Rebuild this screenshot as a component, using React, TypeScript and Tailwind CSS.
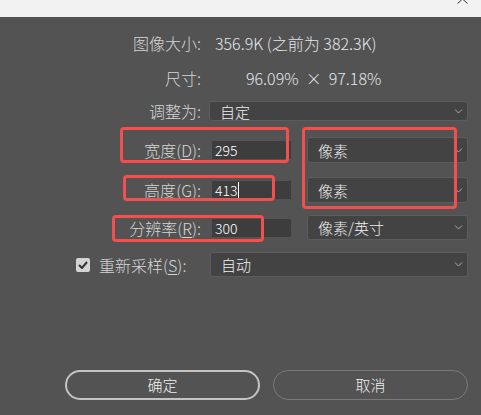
import type { ReactNode } from 'react'

const font = { fontFamily: '"Noto Sans CJK SC", "Noto Sans", sans-serif' }

function Chevron() {
  return (
    <svg width="9" height="5" viewBox="0 0 9 5" className="shrink-0">
      <path d="M1 0.5 L4.5 4 L8 0.5" fill="none" stroke="#a8a8a8" strokeWidth="1" />
    </svg>
  )
}

function Select({ value, className }: { value: string; className: string }) {
  return (
    <div
      className={`flex items-center justify-between rounded-[3px] border border-[#5c5c5c] bg-[#434343] pl-[10px] pr-[4px] text-[15px] text-[#f0f0f0] ${className}`}
    >
      <span className="leading-none">{value}</span>
      <Chevron />
    </div>
  )
}

function Label({ children }: { children: ReactNode }) {
  return (
    <div className="w-[201px] shrink-0 text-right text-[16px] leading-none text-[#d6d6d6]">
      {children}
    </div>
  )
}

function Key({ k }: { k: string }) {
  return (
    <>
      (<span className="underline underline-offset-2">{k}</span>):
    </>
  )
}

function Field({ value, caret }: { value: string; caret?: boolean }) {
  return (
    <div className="ml-[11px] flex h-[18px] w-[79px] shrink-0 items-center bg-[#3d3d3d] pl-[3px] text-[14px] leading-none text-white">
      {value}
      {caret && <span className="ml-px h-[16px] w-px bg-white" />}
    </div>
  )
}

function RedBox({ className }: { className: string }) {
  return <div className={`absolute rounded-[4px] border-[3px] border-[#f24f4f] ${className}`} />
}

export default function App() {
  return (
    <div className="relative h-[415px] w-[481px] overflow-hidden bg-[#535353] font-light" style={font}>
      {/* window strip */}
      <div className="relative h-[17px] bg-[#f2f2f2]">
        <svg width="11" height="4" viewBox="0 0 11 4" className="absolute left-[457px] top-0">
          <path d="M0.5 3.5 L5.5 -1 L10.5 3.5" fill="none" stroke="#333" strokeWidth="1" />
        </svg>
      </div>

      <div className="flex flex-col">
        {/* 图像大小 */}
        <div className="mt-[16px] flex h-[20px] items-center">
          <Label>图像大小:</Label>
          <span className="ml-[14px] text-[16px] leading-none text-[#e2e7ec]">356.9K (之前为 382.3K)</span>
        </div>

        {/* 尺寸 */}
        <div className="mt-[15px] flex h-[20px] items-center">
          <Label>尺寸:</Label>
          <span className="ml-[45px] text-[16px] leading-none text-[#e2e7ec]">
            96.09%&nbsp;&nbsp;×&nbsp;&nbsp;97.18%
          </span>
        </div>

        {/* 调整为 */}
        <div className="mt-[13px] flex h-[20px] items-center">
          <Label>调整为:</Label>
          <Select value="自定" className="ml-[8px] h-[20px] w-[259px]" />
        </div>

        {/* 宽度 */}
        <div className="mt-[16px] flex h-[26px] items-center">
          <Label>
            宽度<Key k="D" />
          </Label>
          <Field value="295" />
          <Select value="像素" className="ml-[16px] h-[26px] w-[161px]" />
        </div>

        {/* 高度 */}
        <div className="mt-[14px] flex h-[26px] items-center">
          <Label>
            高度<Key k="G" />
          </Label>
          <Field value="413" caret />
          <Select value="像素" className="ml-[16px] h-[26px] w-[161px]" />
        </div>

        {/* 分辨率 */}
        <div className="mt-[12px] flex h-[25px] items-center">
          <Label>
            分辨率<Key k="R" />
          </Label>
          <Field value="300" />
          <Select value="像素/英寸" className="ml-[16px] h-[25px] w-[161px]" />
        </div>

        {/* 重新采样 */}
        <div className="mt-[12px] flex h-[25px] items-center">
          <div className="flex w-[210px] shrink-0 items-center pl-[76px]">
            <div className="flex h-[14px] w-[14px] items-center justify-center rounded-[2px] bg-[#d4d4d4]">
              <svg width="10" height="8" viewBox="0 0 10 8">
                <path d="M1 4 L4 7 L9 1" fill="none" stroke="#333" strokeWidth="2" />
              </svg>
            </div>
            <span className="ml-[9px] text-[16px] leading-none text-[#d6d6d6]">
              重新采样<Key k="S" />
            </span>
          </div>
          <Select value="自动" className="h-[25px] w-[258px]" />
        </div>

        {/* buttons */}
        <div className="mt-[93px] flex">
          <button className="ml-[65px] h-[30px] w-[195px] rounded-full border-2 border-[#c4c4c4] text-[15px] text-[#f0f0f0]">
            确定
          </button>
          <button className="ml-[13px] h-[30px] w-[195px] rounded-full border border-[#7a7a7a] text-[15px] text-[#f0f0f0]">
            取消
          </button>
        </div>
      </div>

      {/* annotation boxes */}
      <RedBox className="left-[120px] top-[127px] h-[36px] w-[169px]" />
      <RedBox className="left-[123px] top-[175px] h-[26px] w-[152px]" />
      <RedBox className="left-[302px] top-[127px] h-[82px] w-[155px]" />
      <RedBox className="left-[112px] top-[215px] h-[27px] w-[152px]" />
    </div>
  )
}
